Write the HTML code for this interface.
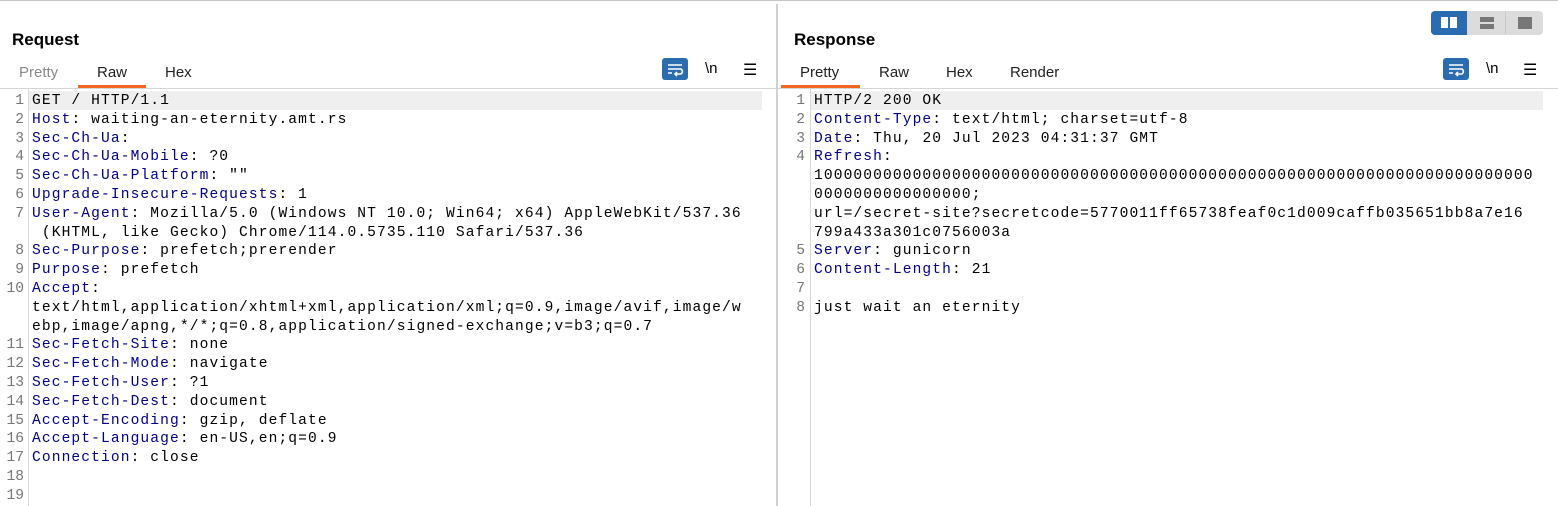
<!DOCTYPE html>
<html><head><meta charset="utf-8"><style>
body{margin:0;width:1558px;height:506px;background:#fff;position:relative;overflow:hidden;font-family:"Liberation Sans",sans-serif}
.abs{position:absolute}
.title{font-weight:bold;font-size:17px;color:#000;top:30px}
.tab{font-size:15px;color:#222;top:64px}
.code{position:absolute;font-family:"Liberation Mono",monospace;font-size:14.6px;letter-spacing:1.1px;line-height:18.8px;white-space:pre;color:#000}
.num{position:absolute;font-family:"Liberation Mono",monospace;font-size:14.6px;line-height:18.8px;white-space:pre;color:#777;text-align:right}
.k{color:#00008b}
</style></head><body>
<div class="abs" style="left:0;top:0;width:1558px;height:1px;background:#c8c8c8"></div>
<div class="abs" style="left:776px;top:4px;width:2px;height:502px;background:#d0d0d0"></div>

<div class="abs title" style="left:12px">Request</div>
<div class="abs tab" style="left:19px;color:#8a8a8a">Pretty</div>
<div class="abs tab" style="left:97px">Raw</div>
<div class="abs tab" style="left:165px">Hex</div>
<div class="abs" style="left:78px;top:85px;width:68px;height:3px;background:#f26522"></div>
<div class="abs" style="left:0;top:88px;width:776px;height:1px;background:#d5d5d5"></div>
<div class="abs" style="left:662px;top:58px;width:26px;height:22px;background:#2b6cb0;border-radius:3px"></div>
<svg class="abs" style="left:662px;top:58px" width="26" height="22"><path d="M6 7h14M6 11h13a3 3 0 0 1 0 5h-5M15 14l-2 2 2 2M6 15h4" stroke="#fff" stroke-width="1.6" fill="none"/></svg>
<div class="abs" style="left:705px;top:60px;font-size:15px">\n</div>
<div class="abs" style="left:743px;top:60px;font-size:16px">☰</div>

<div class="abs" style="left:28px;top:89px;width:1px;height:417px;background:#d8d8d8"></div>
<div class="abs" style="left:29px;top:91px;width:733px;height:19px;background:#efefef"></div>
<div class="num" style="left:0;width:24px;top:92px">1
2
3
4
5
6
7

8
9
10


11
12
13
14
15
16
17
18
19</div>
<div class="code" style="left:32px;top:92px">GET / HTTP/1.1
<span class="k">Host</span>: waiting-an-eternity.amt.rs
<span class="k">Sec-Ch-Ua</span>:
<span class="k">Sec-Ch-Ua-Mobile</span>: ?0
<span class="k">Sec-Ch-Ua-Platform</span>: ""
<span class="k">Upgrade-Insecure-Requests</span>: 1
<span class="k">User-Agent</span>: Mozilla/5.0 (Windows NT 10.0; Win64; x64) AppleWebKit/537.36
 (KHTML, like Gecko) Chrome/114.0.5735.110 Safari/537.36
<span class="k">Sec-Purpose</span>: prefetch;prerender
<span class="k">Purpose</span>: prefetch
<span class="k">Accept</span>:
text/html,application/xhtml+xml,application/xml;q=0.9,image/avif,image/w
ebp,image/apng,*/*;q=0.8,application/signed-exchange;v=b3;q=0.7
<span class="k">Sec-Fetch-Site</span>: none
<span class="k">Sec-Fetch-Mode</span>: navigate
<span class="k">Sec-Fetch-User</span>: ?1
<span class="k">Sec-Fetch-Dest</span>: document
<span class="k">Accept-Encoding</span>: gzip, deflate
<span class="k">Accept-Language</span>: en-US,en;q=0.9
<span class="k">Connection</span>: close</div>

<div class="abs" style="left:1431px;top:11px;width:112px;height:24px;background:#dcdcdc;border-radius:4px"></div>
<div class="abs" style="left:1431px;top:11px;width:36px;height:24px;background:#2b6cb0;border-radius:4px 0 0 4px"></div>
<div class="abs" style="left:1505px;top:12px;width:1px;height:22px;background:#c8c8c8"></div>
<div class="abs" style="left:1441px;top:17px;width:7px;height:11px;background:#fff"></div>
<div class="abs" style="left:1450px;top:17px;width:7px;height:11px;background:#fff"></div>
<div class="abs" style="left:1480px;top:17px;width:14px;height:5px;background:#777"></div>
<div class="abs" style="left:1480px;top:24px;width:14px;height:5px;background:#777"></div>
<div class="abs" style="left:1518px;top:17px;width:14px;height:12px;background:#777"></div>

<div class="abs title" style="left:794px">Response</div>
<div class="abs tab" style="left:800px">Pretty</div>
<div class="abs tab" style="left:879px">Raw</div>
<div class="abs tab" style="left:946px">Hex</div>
<div class="abs tab" style="left:1010px">Render</div>
<div class="abs" style="left:781px;top:85px;width:79px;height:3px;background:#f26522"></div>
<div class="abs" style="left:778px;top:88px;width:780px;height:1px;background:#d5d5d5"></div>
<div class="abs" style="left:1443px;top:58px;width:26px;height:22px;background:#2b6cb0;border-radius:3px"></div>
<svg class="abs" style="left:1443px;top:58px" width="26" height="22"><path d="M6 7h14M6 11h13a3 3 0 0 1 0 5h-5M15 14l-2 2 2 2M6 15h4" stroke="#fff" stroke-width="1.6" fill="none"/></svg>
<div class="abs" style="left:1486px;top:60px;font-size:15px">\n</div>
<div class="abs" style="left:1523px;top:60px;font-size:16px">☰</div>

<div class="abs" style="left:810px;top:89px;width:1px;height:417px;background:#d8d8d8"></div>
<div class="abs" style="left:811px;top:91px;width:732px;height:19px;background:#efefef"></div>
<div class="num" style="left:780px;width:25px;top:92px">1
2
3
4




5
6
7
8</div>
<div class="code" style="left:814px;top:92px">HTTP/2 200 OK
<span class="k">Content-Type</span>: text/html; charset=utf-8
<span class="k">Date</span>: Thu, 20 Jul 2023 04:31:37 GMT
<span class="k">Refresh</span>:
1000000000000000000000000000000000000000000000000000000000000000000000000
0000000000000000;
url=/secret-site?secretcode=5770011ff65738feaf0c1d009caffb035651bb8a7e16
799a433a301c0756003a
<span class="k">Server</span>: gunicorn
<span class="k">Content-Length</span>: 21

just wait an eternity</div>
</body></html>
